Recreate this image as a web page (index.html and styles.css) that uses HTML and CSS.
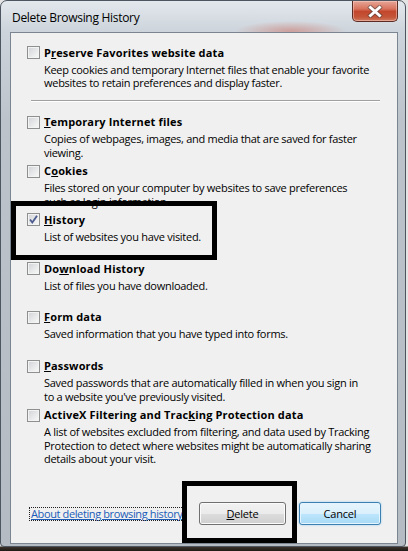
FILE: index.html
```html
<!DOCTYPE html>
<html lang="en">
<head>
<meta charset="utf-8">
<title>Delete Browsing History</title>
<link rel="stylesheet" href="styles.css">
</head>
<body>
<div class="window">
  <div class="titlebar">
    <span class="title">Delete Browsing History</span>
    <button class="close" aria-label="Close">
      <svg width="16" height="13" viewBox="0 0 16 13">
        <path d="M3.5 2.5 L12.5 10.5 M12.5 2.5 L3.5 10.5" stroke="#3a3a3a" stroke-width="4.6" stroke-linecap="square" fill="none" opacity="0.55"/>
        <path d="M3.5 2.5 L12.5 10.5 M12.5 2.5 L3.5 10.5" stroke="#ffffff" stroke-width="3" stroke-linecap="square" fill="none"/>
      </svg>
    </button>
  </div>
  <div class="client">
    <div class="options">
      <div class="item">
        <div class="row"><span class="cb"></span><span class="label">P<u>r</u>eserve Favorites website data</span></div>
        <p class="desc">Keep cookies and temporary Internet files that enable your favorite<br>websites to retain preferences and display faster.</p>
      </div>
      <div class="sep"></div>
      <div class="item">
        <div class="row"><span class="cb"></span><span class="label"><u>T</u>emporary Internet files</span></div>
        <p class="desc">Copies of webpages, images, and media that are saved for faster<br>viewing.</p>
      </div>
      <div class="item">
        <div class="row"><span class="cb"></span><span class="label">C<u>o</u>okies</span></div>
        <p class="desc">Files stored on your computer by websites to save preferences<br>such as login information.</p>
      </div>
      <div class="item">
        <div class="row"><span class="cb checked"><svg width="11" height="11" viewBox="0 0 11 11"><path d="M2 5.5 L4.3 8.5 L9 1.8" stroke="#4b5a8f" stroke-width="1.8" fill="none"/></svg></span><span class="label"><u>H</u>istory</span></div>
        <p class="desc">List of websites you have visited.</p>
      </div>
      <div class="item">
        <div class="row"><span class="cb"></span><span class="label">Do<u>w</u>nload History</span></div>
        <p class="desc">List of files you have downloaded.</p>
      </div>
      <div class="item">
        <div class="row"><span class="cb"></span><span class="label"><u>F</u>orm data</span></div>
        <p class="desc">Saved information that you have typed into forms.</p>
      </div>
      <div class="item">
        <div class="row"><span class="cb"></span><span class="label"><u>P</u>asswords</span></div>
        <p class="desc">Saved passwords that are automatically filled in when you sign in<br>to a website you've previously visited.</p>
      </div>
      <div class="item">
        <div class="row"><span class="cb"></span><span class="label">ActiveX Filtering and Trac<u>k</u>ing Protection data</span></div>
        <p class="desc">A list of websites excluded from filtering, and data used by Tracking<br>Protection to detect where websites might be automatically sharing<br>details about your visit.</p>
      </div>
    </div>
    <div class="footer">
      <a class="link" href="#">About deleting browsing history</a>
      <button class="btn btn-delete"><u>D</u>elete</button>
      <button class="btn btn-default">Cancel</button>
    </div>
  </div>
</div>
<div class="mark mark-history"></div>
<div class="mark mark-delete"></div>
</body>
</html>
```

FILE: styles.css
```css
* { box-sizing: border-box; }

html, body {
  margin: 0;
  padding: 0;
}

body {
  width: 408px;
  height: 551px;
  overflow: hidden;
  position: relative;
  background: linear-gradient(to bottom, #e4e4e4 0, #e4e4e4 546px, #3b322a 547px, #1e1a17 551px);
  font-family: "Open Sans", "Noto Sans", sans-serif;
  font-size: 11px;
  letter-spacing: -0.28px;
  color: #000;
}

.window {
  width: 406px;
  height: 547px;
  border: 1px solid #4d5660;
  border-radius: 7px 7px 4px 4px;
  padding: 0 7px 2px 9px;
  display: flex;
  flex-direction: column;
  background:
    radial-gradient(ellipse 55px 10px at 290px 30px, rgba(205, 95, 80, 0.45), rgba(205, 95, 80, 0) 100%),
    linear-gradient(to bottom, #e3e8ed 0, #cdd4db 30px, #bcc3ca 120px, #b4bbc2 100%);
}

.titlebar {
  height: 31px;
  display: flex;
  align-items: flex-start;
  justify-content: space-between;
}

.title {
  margin: 9px 0 0 2px;
  font-size: 12px;
  letter-spacing: -0.3px;
  line-height: 15px;
  color: #000;
}

.close {
  width: 46px;
  height: 21px;
  margin-top: 0;
  padding: 0;
  border: 1px solid #5b2c24;
  border-top: none;
  border-radius: 0 0 5px 5px;
  background: linear-gradient(to bottom, #e6a697 0%, #d8725d 40%, #c2472d 52%, #c45538 80%, #d07a5e 100%);
  box-shadow: inset 0 0 0 1px rgba(255, 220, 210, 0.45);
  display: flex;
  align-items: center;
  justify-content: center;
}

.client {
  flex: 1;
  display: flex;
  flex-direction: column;
  background: #f0f0f0;
  border: 1px solid #7a8590;
}

.options {
  padding: 12.5px 17px 0 16px;
}

.item {
  margin-bottom: 4.8px;
}

.row {
  display: flex;
  align-items: center;
  height: 14px;
  gap: 4px;
}

.cb {
  width: 13px;
  height: 13px;
  flex: none;
  border: 1px solid #8e8f8f;
  background: linear-gradient(135deg, #cfd2d6 0%, #e6e7e8 50%, #f9f9f9 100%);
  box-shadow: inset 0 0 0 1px #f3f3f3;
  display: flex;
  align-items: center;
  justify-content: center;
}

.label {
  font-weight: 700;
  letter-spacing: 0.15px;
  line-height: 14px;
  white-space: nowrap;
}

.label u, .btn u {
  text-decoration-thickness: 1px;
  text-underline-offset: 1px;
}

.desc {
  margin: 3px 0 0 17px;
  line-height: 13.5px;
  min-height: 27px;
  white-space: nowrap;
}

.sep {
  height: 2px;
  margin: 10.8px 0 13px 4px;
  border-top: 1px solid #a0a0a0;
  border-bottom: 1px solid #ffffff;
}

.footer {
  margin-top: auto;
  display: flex;
  align-items: center;
  padding: 0 16px 18px 19px;
}

.link {
  color: #1a5cb8;
  letter-spacing: -0.38px;
  text-decoration: underline;
  outline: 1px dotted #202020;
  outline-offset: 0;
  line-height: 12px;
  padding: 0 1px;
}

.btn {
  height: 23px;
  padding: 0;
  border: 1px solid #707070;
  border-radius: 3px;
  font-family: inherit;
  font-size: 11px;
  letter-spacing: -0.2px;
  color: #000;
  background: linear-gradient(to bottom, #f2f2f2 0%, #ebebeb 50%, #dddddd 51%, #cfcfcf 100%);
  box-shadow: inset 0 0 0 1px #fbfbfb;
}

.btn-delete {
  width: 87px;
  margin-left: auto;
}

.btn-default {
  width: 82px;
  margin-left: 13px;
  border-color: #3c7fb1;
  background: linear-gradient(to bottom, #e8f5fc 0%, #d9f0fc 50%, #bee6fd 51%, #a7d9f5 100%);
  box-shadow: inset 0 0 0 1px #e6f5fd, 0 0 2px #8cc8ef;
}

.mark {
  position: absolute;
  border: 5px solid #000;
}

.mark-history {
  left: 11px;
  top: 201px;
  width: 206px;
  height: 59px;
}

.mark-delete {
  left: 182px;
  top: 481px;
  width: 115px;
  height: 62px;
}
```
